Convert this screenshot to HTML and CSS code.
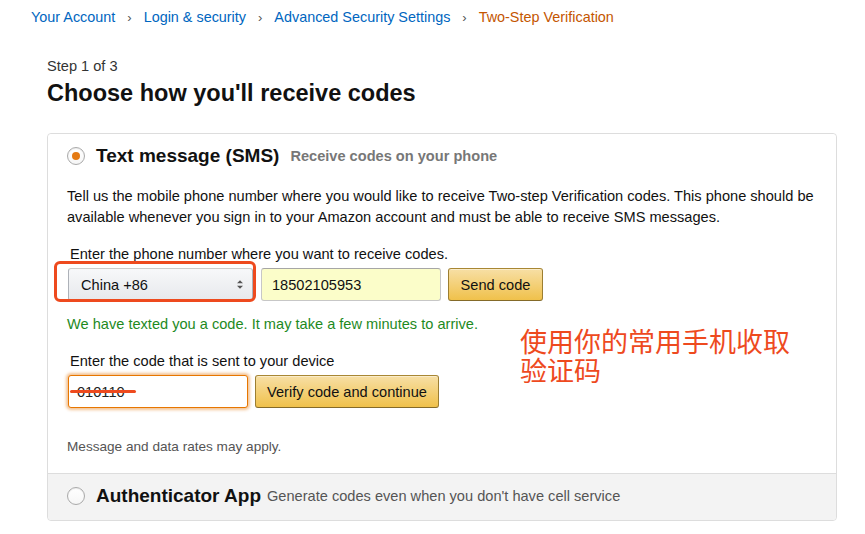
FILE: index.html
```html
<!DOCTYPE html>
<html>
<head>
<meta charset="utf-8">
<link rel="stylesheet" href="styles.css">
</head>
<body>
<nav class="crumbs">
  <a class="crumb">Your Account</a><span class="sep">›</span><a class="crumb">Login &amp; security</a><span class="sep">›</span><a class="crumb">Advanced Security Settings</a><span class="sep">›</span><span class="crumb current">Two-Step Verification</span>
</nav>
<main class="page">
  <div class="step">Step 1 of 3</div>
  <h1 class="title">Choose how you'll receive codes</h1>
  <div class="box">
    <section class="option option-open">
      <div class="opt-head">
        <span class="radio checked"></span>
        <span class="opt-title">Text message (SMS)</span>
        <span class="opt-sub bold">Receive codes on your phone</span>
      </div>
      <p class="desc">Tell us the mobile phone number where you would like to receive Two-step Verification codes. This phone should be available whenever you sign in to your Amazon account and must be able to receive SMS messages.</p>
      <div class="label">Enter the phone number where you want to receive codes.</div>
      <div class="row">
        <div class="select-wrap">
          <div class="select">
            <span>China +86</span>
            <svg class="arrows" width="8" height="11" viewBox="0 0 8 11"><path d="M1 4.2 L4 1.2 L7 4.2 Z M1 6.8 L4 9.8 L7 6.8 Z" fill="#555"/></svg>
          </div>
          <div class="mark-rect"></div>
        </div>
        <div class="input phone">18502105953</div>
        <button class="btn send">Send code</button>
      </div>
      <div class="ok">We have texted you a code. It may take a few minutes to arrive.</div>
      <div class="label label2">Enter the code that is sent to your device</div>
      <div class="row">
        <div class="input code"><span class="code-text">010110</span><span class="strike"></span></div>
        <button class="btn verify">Verify code and continue</button>
      </div>
      <div class="note">Message and data rates may apply.</div>
    </section>
    <section class="option option-closed">
      <div class="opt-head">
        <span class="radio"></span>
        <span class="opt-title">Authenticator App</span>
        <span class="opt-sub plain">Generate codes even when you don't have cell service</span>
      </div>
    </section>
    <div class="annot">使用你的常用手机收取<br>验证码</div>
  </div>
</main>
</body>
</html>
```

FILE: styles.css
```css
* { box-sizing: border-box; }
html, body { margin: 0; padding: 0; background: #fff; }
body {
  font-family: "Liberation Sans", Arial, sans-serif;
  color: #111;
  font-size: 14.6px;
}
.crumbs {
  padding: 8px 0 0 31px;
  line-height: 19px;
  font-size: 14.4px;
  white-space: nowrap;
}
.crumb { color: #0066c0; text-decoration: none; }
.crumb.current { color: #c45500; }
.sep { color: #555; padding: 0 12px 0 12px; font-size: 13px; }

.page { margin-left: 47px; width: 790px; }
.step {
  margin-top: 30px;
  font-size: 14.6px;
  line-height: 18px;
  color: #333;
}
.title {
  margin: 3px 0 0;
  font-size: 23.5px;
  line-height: 30px;
  font-weight: 700;
  color: #111;
}
.box {
  position: relative;
  margin-top: 25px;
  border: 1px solid #ddd;
  border-radius: 4px;
}
.option { padding: 10px 19px; }
.option-open { padding-bottom: 17px; background: #fff; border-radius: 4px 4px 0 0; }
.option-closed {
  background: #f3f3f3;
  border-top: 1px solid #ddd;
  padding-top: 10px;
  padding-bottom: 12px;
  border-radius: 0 0 4px 4px;
}
.opt-head {
  display: flex;
  align-items: center;
  height: 24px;
  white-space: nowrap;
}
.radio {
  width: 18px;
  height: 18px;
  border-radius: 50%;
  border: 1px solid #aaa;
  background: linear-gradient(#fff, #f6f6f6);
  box-shadow: inset 0 1px 1px rgba(0,0,0,.08);
  display: flex;
  align-items: center;
  justify-content: center;
  margin-right: 11px;
  flex: none;
}
.radio.checked::after {
  content: "";
  width: 8px;
  height: 8px;
  border-radius: 50%;
  background: #e47911;
}
.opt-title { font-size: 19px; font-weight: 700; color: #111; }
.opt-sub { color: #767676; font-size: 14.6px; }
.opt-sub.bold { font-weight: 700; margin-left: 11px; color: #777; }
.opt-sub.plain { margin-left: 6px; color: #555; }

.desc {
  margin: 18px 0 0;
  line-height: 21px;
  font-size: 14.6px;
  color: #111;
}
.label {
  width: fit-content;
  margin-top: 17px;
  padding-left: 3px;
  line-height: 18px;
  font-size: 14.6px;
  color: #111;
}
.label2 { margin-top: 19px; }
.row {
  display: flex;
  margin-top: 5px;
  padding-left: 1px;
  height: 33px;
}
.select-wrap { position: relative; width: 185px; height: 33px; margin-right: 8px; }
.select {
  height: 33px;
  border: 1px solid #adb1b8;
  border-color: #cdcdcd #adb1b8 #a2a6ac;
  border-radius: 3px;
  background: linear-gradient(#f7f8fa, #e7e9ec);
  display: flex;
  align-items: center;
  justify-content: space-between;
  padding: 0 8px 0 12px;
  font-size: 14.6px;
  color: #111;
}
.arrows { display: block; }
.mark-rect {
  position: absolute;
  left: -14px;
  top: -7px;
  width: 202px;
  height: 41px;
  border: 3px solid #ee4a1e;
  border-radius: 6px;
}
.input {
  height: 33px;
  border: 1px solid #c7c7c7;
  border-top-color: #a6a6a6;
  border-radius: 3px;
  display: flex;
  align-items: center;
  padding: 0 10px;
  font-size: 14.6px;
  color: #111;
}
.phone { width: 180px; background: #fbfdc9; margin-right: 7px; }
.code {
  position: relative;
  width: 180px;
  margin-right: 7px;
  background: #fff;
  border-color: #e77600;
  box-shadow: 0 0 3px 2px rgba(228,121,17,.45);
  padding-left: 8px;
}
.code-text { color: #222; }
.strike {
  position: absolute;
  left: 1px;
  top: 14px;
  width: 66px;
  height: 3px;
  background: #ee4a1e;
  border-radius: 2px;
}
.btn {
  height: 33px;
  border: 1px solid #a88734;
  border-color: #a88734 #9c7e31 #846a29;
  border-radius: 3px;
  background: linear-gradient(#f7dfa5, #f0c14b);
  box-shadow: inset 0 1px 0 rgba(255,255,255,.4);
  font-family: "Liberation Sans", Arial, sans-serif;
  font-size: 14.6px;
  color: #111;
  padding: 0;
}
.send { width: 95px; }
.verify { width: 184px; }
.ok {
  width: fit-content;
  margin-top: 14px;
  line-height: 18px;
  color: #1e8a1e;
  font-size: 14.6px;
}
.note {
  width: fit-content;
  margin-top: 30px;
  line-height: 18px;
  font-size: 13.6px;
  color: #555;
}
.annot {
  position: absolute;
  left: 472px;
  top: 192px;
  font-family: "Noto Sans CJK SC", sans-serif;
  font-size: 27px;
  line-height: 29px;
  color: #ee4a1e;
  white-space: nowrap;
}
```
